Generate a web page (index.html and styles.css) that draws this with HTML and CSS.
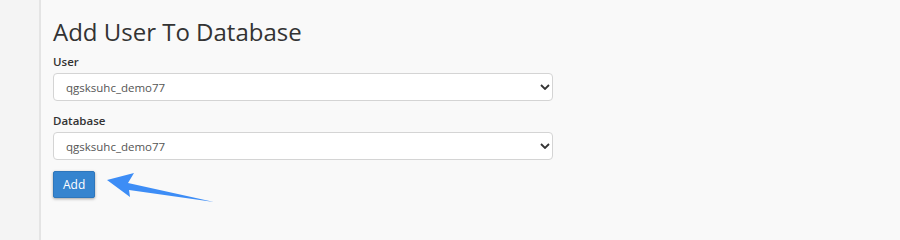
FILE: index.html
```html
<!DOCTYPE html>
<html lang="en">
<head>
<meta charset="utf-8">
<title>Add User To Database</title>
<link rel="stylesheet" href="styles.css">
</head>
<body>
<div class="layout">
  <aside class="sidebar"></aside>
  <main class="content">
    <h1 class="title">Add User To Database</h1>
    <form class="form">
      <div class="field">
        <label class="label" for="user">User</label>
        <div class="select-wrap">
          <select id="user" class="select">
            <option>qgsksuhc_demo77</option>
          </select>
          <svg class="chevron" width="10" height="6" viewBox="0 0 10 6"><path d="M1 1 L5 5 L9 1" fill="none" stroke="#333" stroke-width="1.8"/></svg>
        </div>
      </div>
      <div class="field">
        <label class="label" for="db">Database</label>
        <div class="select-wrap">
          <select id="db" class="select">
            <option>qgsksuhc_demo77</option>
          </select>
          <svg class="chevron" width="10" height="6" viewBox="0 0 10 6"><path d="M1 1 L5 5 L9 1" fill="none" stroke="#333" stroke-width="1.8"/></svg>
        </div>
      </div>
      <div class="actions">
        <button type="button" class="btn">Add</button>
      </div>
    </form>
  </main>
</div>
<svg class="arrow" width="900" height="228" viewBox="0 0 900 228">
  <polygon points="107,180 134,173 128,183 214,202 129,190 130,197" fill="#3d8df6"/>
</svg>
</body>
</html>
```
FILE: styles.css
```css
html, body {
  margin: 0;
  padding: 0;
  height: 100%;
}
body {
  background: #f9f9f9;
  font-family: "Open Sans", "Liberation Sans", sans-serif;
  color: #333;
  position: relative;
  overflow: hidden;
}
.layout {
  display: flex;
  min-height: 100vh;
}
.sidebar {
  width: 39px;
  flex: none;
  background: #f4f4f4;
  border-right: 2px solid #e4e4e4;
}
.content {
  flex: 1;
  padding: 17px 0 0 12px;
}
.title {
  margin: 0 0 6px;
  font-size: 24px;
  line-height: 30px;
  font-weight: 400;
  color: #333;
}
.field {
  margin-bottom: 11px;
}
.label {
  display: block;
  font-size: 11.5px;
  line-height: 17px;
  font-weight: 600;
  color: #333;
  margin-bottom: 3px;
}
.select-wrap {
  position: relative;
  width: 500px;
}
.select {
  -webkit-appearance: none;
  appearance: none;
  display: block;
  width: 500px;
  height: 28px;
  box-sizing: border-box;
  border: 1px solid #d4d4d4;
  border-radius: 4px;
  background: #fff;
  padding: 0 24px 0 12px;
  font-family: "Open Sans", "Liberation Sans", sans-serif;
  font-size: 11.5px;
  color: #555;
}
.chevron {
  position: absolute;
  right: 3px;
  top: 11px;
  pointer-events: none;
}
.btn {
  height: 27px;
  padding: 0 9px;
  border: 1px solid #2e76bb;
  border-radius: 2px;
  background: #3584cf;
  color: #fff;
  font-family: "Open Sans", "Liberation Sans", sans-serif;
  font-size: 12px;
  box-shadow: 0 1px 3px rgba(0, 0, 0, 0.35);
  cursor: pointer;
}
.arrow {
  position: absolute;
  left: 0;
  top: 0;
  pointer-events: none;
}
```
